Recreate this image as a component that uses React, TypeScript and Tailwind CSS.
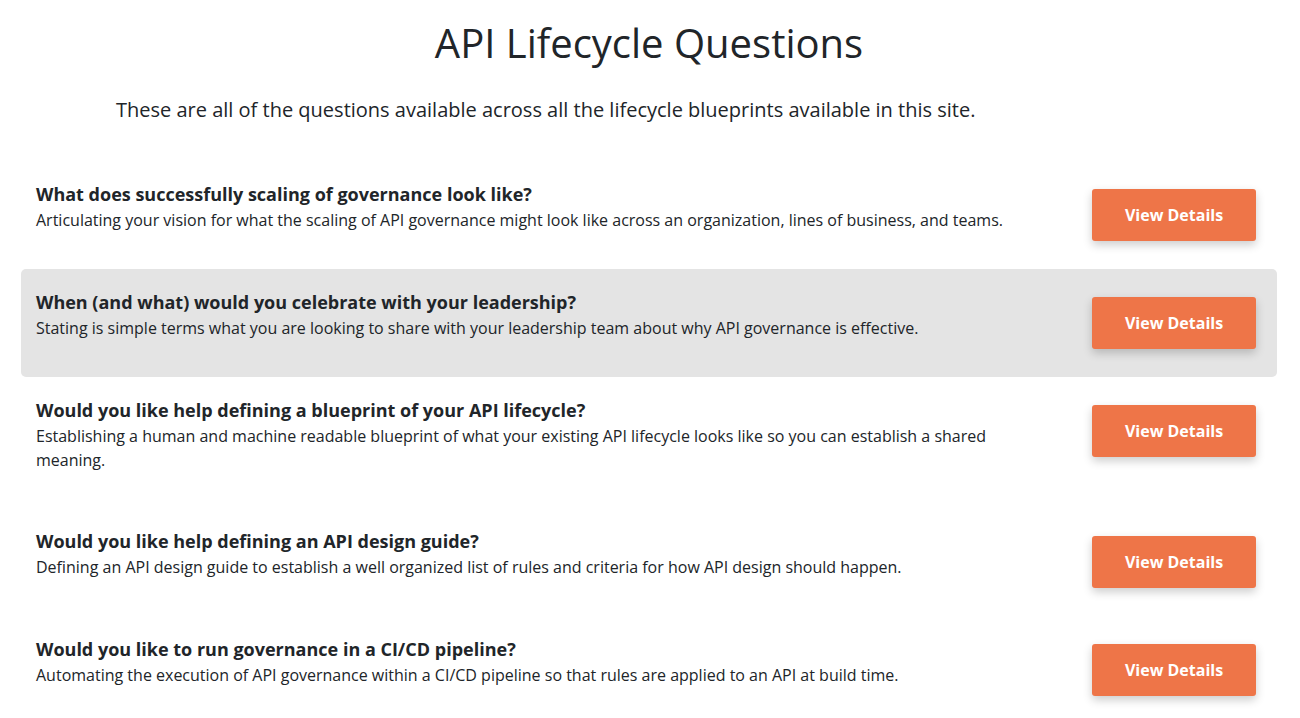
const questions = [
  {
    title: "What does successfully scaling of governance look like?",
    text: "Articulating your vision for what the scaling of API governance might look like across an organization, lines of business, and teams.",
  },
  {
    title: "When (and what) would you celebrate with your leadership?",
    text: "Stating is simple terms what you are looking to share with your leadership team about why API governance is effective.",
    active: true,
  },
  {
    title: "Would you like help defining a blueprint of your API lifecycle?",
    text: "Establishing a human and machine readable blueprint of what your existing API lifecycle looks like so you can establish a shared meaning.",
  },
  {
    title: "Would you like help defining an API design guide?",
    text: "Defining an API design guide to establish a well organized list of rules and criteria for how API design should happen.",
  },
  {
    title: "Would you like to run governance in a CI/CD pipeline?",
    text: "Automating the execution of API governance within a CI/CD pipeline so that rules are applied to an API at build time.",
  },
];

export default function App() {
  return (
    <main className="bg-white pr-[23px] pl-[21px] font-['Open_Sans',sans-serif] text-base text-[#212529]">
      <h1 className="pt-[19px] text-center text-[40px] leading-[48px]">API Lifecycle Questions</h1>
      <p className="mt-7 px-[95px] text-xl leading-[30px]">
        These are all of the questions available across all the lifecycle blueprints available in this site.
      </p>
      <ul className="mt-9">
        {questions.map((q) => (
          <li
            key={q.title}
            className={`flex items-start rounded-[5px] pt-5 pr-[21px] pb-7 pl-[15px] ${q.active ? "bg-[#e4e4e4]" : ""}`}
          >
            <div className="min-w-0 flex-1 pr-[77px] pb-2">
              <h2 className="text-lg leading-[27px] font-bold">{q.title}</h2>
              <p className="leading-6">{q.text}</p>
            </div>
            <a
              href="#details"
              className="mt-2 block w-[164px] shrink-0 rounded-[3px] bg-[#ee7548] py-[14px] text-center leading-6 font-bold text-white shadow-[0_4px_10px_rgba(0,0,0,0.2)]"
            >
              View Details
            </a>
          </li>
        ))}
      </ul>
    </main>
  );
}
